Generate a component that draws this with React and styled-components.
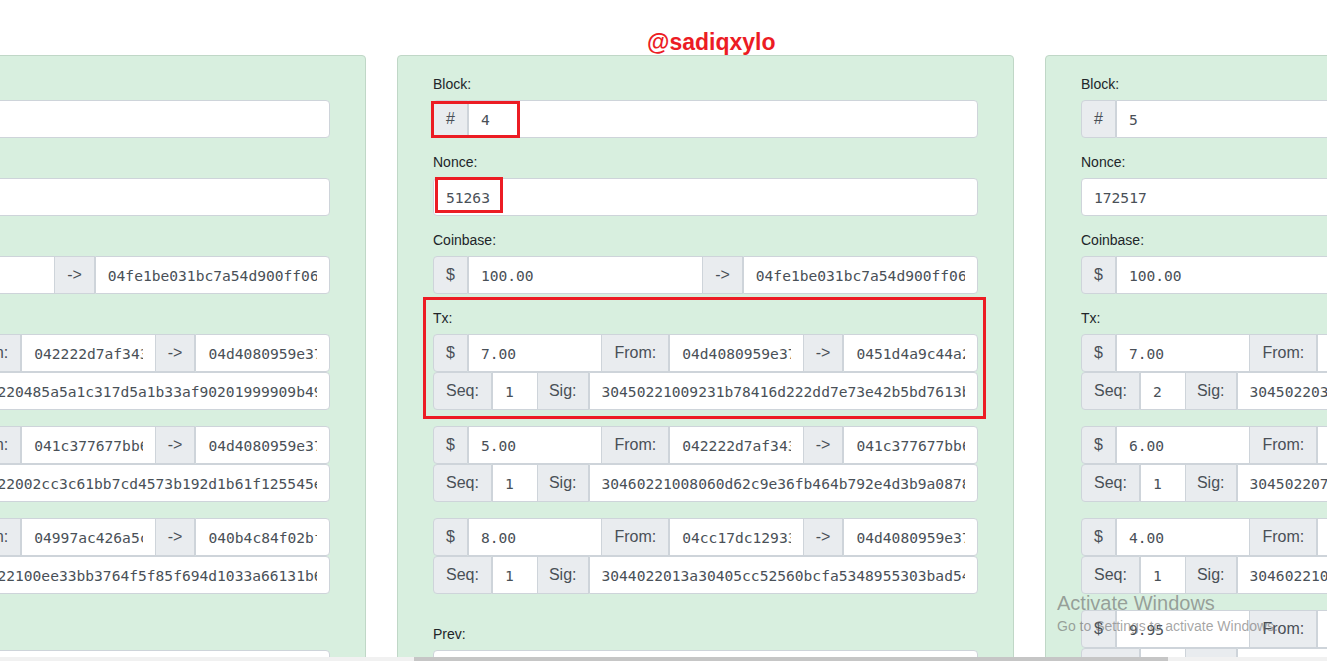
import React from 'react';
import styled, { createGlobalStyle } from 'styled-components';

const GlobalStyle = createGlobalStyle`
  html, body {
    margin: 0;
    padding: 0;
    background: #fff;
    overflow: hidden;
  }
  body {
    font-family: "Liberation Sans", Arial, sans-serif;
    color: #212529;
  }
`;

const Page = styled.div`
  position: relative;
  width: 1327px;
  height: 661px;
  overflow: hidden;
`;

const Handle = styled.div`
  position: absolute;
  top: 31px;
  left: 647px;
  font-size: 23px;
  line-height: 23px;
  font-weight: 700;
  color: #ec1c24;
  z-index: 3;
`;

const Chain = styled.div`
  display: flex;
  align-items: flex-start;
  gap: 31px;
  width: max-content;
  padding-top: 55px;
  margin-left: -251px;
`;

const Card = styled.div`
  flex: 0 0 617px;
  width: 617px;
  min-width: 0;
  box-sizing: border-box;
  background: #d8efdf;
  border: 1px solid #c0d7c7;
  border-radius: 4px;
  padding: 20px 35px 24px;
`;

const Field = styled.div`
  position: relative;
  display: flow-root;
  margin-bottom: 16px;
`;

const Label = styled.label`
  display: block;
  font-size: 14px;
  line-height: 16px;
  margin-bottom: 8px;
  color: #212529;
`;

const TxItem = styled.div`
  margin-bottom: 16px;
`;

const Group = styled.div`
  display: flex;
  align-items: stretch;
  width: 100%;
  min-width: 0;

  & > * + * {
    margin-left: -1px;
  }
  & > *:first-child {
    border-top-left-radius: 4px;
    border-bottom-left-radius: 4px;
  }
  & > *:last-child {
    border-top-right-radius: 4px;
    border-bottom-right-radius: 4px;
  }
`;

const Addon = styled.span`
  display: flex;
  align-items: center;
  flex: 0 0 auto;
  padding: 6px ${(p) => (p.$tight ? 11 : 12)}px;
  font-size: 16px;
  line-height: 24px;
  color: #495057;
  background: #e9ecef;
  border: 1px solid #ced4da;
  white-space: nowrap;
`;

const Input = styled.input`
  flex: ${(p) => (p.$w ? `0 0 ${p.$w}px` : '1 1 0')};
  width: ${(p) => (p.$w ? `${p.$w}px` : '0')};
  min-width: 0;
  box-sizing: border-box;
  height: 38px;
  margin: 0;
  padding: 6px 12px;
  font-family: "DejaVu Sans Mono", "Liberation Mono", monospace;
  font-size: 14.6px;
  line-height: 24px;
  color: #495057;
  background: #fff;
  border: 1px solid #ced4da;
  border-radius: 0;
  outline: none;
`;

const Mark = styled.div`
  position: absolute;
  left: ${(p) => p.$x}px;
  top: ${(p) => p.$y}px;
  width: ${(p) => p.$w}px;
  height: ${(p) => p.$h}px;
  box-sizing: border-box;
  border: 3px solid #ec1c24;
  pointer-events: none;
  z-index: 2;
`;

const Watermark = styled.div`
  position: absolute;
  left: 1057px;
  top: 593px;
  color: rgba(105, 105, 105, 0.6);
  pointer-events: none;
  z-index: 4;
`;

const WmTitle = styled.div`
  font-size: 20px;
  line-height: 20px;
`;

const WmText = styled.div`
  margin-top: 6px;
  font-size: 14px;
  line-height: 14px;
`;

const ScrollTrack = styled.div`
  position: absolute;
  left: 0;
  right: 0;
  bottom: 0;
  height: 4px;
  background: #f1f1f1;
  z-index: 5;
`;

const ScrollThumb = styled.div`
  margin-left: 414px;
  width: 754px;
  height: 100%;
  background: #c6c6c6;
`;

const K = {
  coin: '04fe1be031bc7a54d900ff06e08c7bd1e7bd14e2de0e9e4f4e2b3d1d4c6bb0b4d1a07f3c',
  d408: '04d4080959e37a8c2b0f5d1e66c3b72a9e0f1d44c8b7e51a3cd2f09b6e7a15c4d8e2f90a',
  a222: '042222d7af3437c1e5b8a09d3f62e4b7c1a58d90e2f36b4c7d1e8a5f0b93c2d6e4a71b8',
  c377: '041c377677bb6e2a8f4d1c09b35e7a62d8f1c4b90e3a75d2c6f8b1e04a9d37c5b2e61f0',
  d4a9: '0451d4a9c44a2b7e9f3c6d0a81e5b4f27c9d3a06e8b15f4c2d7a90e3b6c1f58d4a2e7b9',
  cc17: '04cc17dc129337e4a1b6f8d2c09e5a73b4d1f6c82e0a9b5d3f7c1e4a68b2d90f3c5e7a1',
  ac42: '04997ac426a5c3e8b1d7f40a2c6e9b53d1f8a04c7e2b6d95a3f1c8e07b4d2a6f9c3e5b1',
  b4c8: '040b4c84f02bf7a3e9c1d5b08f6a2e4c7d3b19f0e5a8c2d6b4f71e3a9c0d5b8e2f6a4c',
};

const blocks = [
  {
    block: 3,
    nonce: '35230',
    coinbase: { amount: '100.00', to: K.coin },
    txs: [
      { amount: '10.00', from: K.a222, to: K.d408, seq: 1, sig: '30440220485a5a1c317d5a1b33af90201999909b49c2e7f1a0d83b6e5c94f2a17d0b8e3c6' },
      { amount: '20.00', from: K.c377, to: K.d408, seq: 1, sig: '3044022002cc3c61bb7cd4573b192d1b61f125545e8a1d07c3f9b2e64a5d81c0f7e3b9a2' },
      { amount: '15.00', from: K.ac42, to: K.b4c8, seq: 1, sig: '3045022100ee33bb3764f5f85f694d1033a66131b6d2e8a4c07f1b93e5d6a2c80f4b7e1d9' },
    ],
    prev: '0000a4b1c9e2f7d83a6b05c1e94f2d7a8b3c6e0f91d4a5b72c8e3f06d1a9b4c7',
    hash: '0000d8f3a1b6c4e29f07d5a83b1c6e4f2a9d0b7c85e3f1a6d4b92c0e7f5a38b1',
  },
  {
    block: 4,
    nonce: '51263',
    coinbase: { amount: '100.00', to: K.coin },
    txs: [
      { amount: '7.00', from: K.d408, to: K.d4a9, seq: 1, sig: '30450221009231b78416d222dd7e73e42b5bd7613b4e8c1a07f3d92b6e5a4c81d0f7b3e9c2' },
      { amount: '5.00', from: K.a222, to: K.c377, seq: 1, sig: '30460221008060d62c9e36fb464b792e4d3b9a08781c5e2f7a0d4b93c6e18f5a2d07b4c9e3' },
      { amount: '8.00', from: K.cc17, to: K.d408, seq: 1, sig: '3044022013a30405cc52560bcfa5348955303bad54e1c7a09f3b8d26e4a5c17f0b2d9e8a3' },
    ],
    prev: '0000d8f3a1b6c4e29f07d5a83b1c6e4f2a9d0b7c85e3f1a6d4b92c0e7f5a38b1',
    hash: '000072e5b9c1a4d8f3e06b2c7a95d1f4e8b3a0c6d29f5e1b7a4c83d0f6e2b9a5',
    marks: true,
  },
  {
    block: 5,
    nonce: '172517',
    coinbase: { amount: '100.00', to: K.coin },
    txs: [
      { amount: '7.00', from: K.d4a9, to: K.cc17, seq: 2, sig: '3045022034b1e9c7a2d5f80e3c6b4a91d7f2e05c8b3a6d1e9f4c27b0a5d8e3f61c9b2a7' },
      { amount: '6.00', from: K.c377, to: K.ac42, seq: 1, sig: '304502207e1c9a4d3b6f82e05a7c1d94b3e6f2a08d5c7b1e94a3f60c2d8b5e7a1f4c9d3' },
      { amount: '4.00', from: K.b4c8, to: K.a222, seq: 1, sig: '3046022100f3a7c2e9b5d14a8e06c3b7f91d2a5e4c8b0f6d3a91e7c52b4d8a0f3e6c1b9d7' },
      { amount: '9.95', from: K.d408, to: K.b4c8, seq: 1, sig: '30450221008d2b6f1e9c4a37d05b8e2c6f1a94d3e7b0c5a82f6d1e4b93c7a0f5d2e8b6c1' },
    ],
    prev: '000072e5b9c1a4d8f3e06b2c7a95d1f4e8b3a0c6d29f5e1b7a4c83d0f6e2b9a5',
    hash: '00001c6e8a3f5b2d97e04c1a6b8d3f5e2a9c07b4d1e6f38a5c2b9d0e7f4a16c3',
  },
];

const Val = ({ v, w }) => <Input readOnly value={v} $w={w} />;

const Block = ({ data }) => (
  <Card>
    <Field>
      <Label>Block:</Label>
      <Group>
        <Addon>#</Addon>
        <Val v={String(data.block)} />
      </Group>
      {data.marks && <Mark $x={-2} $y={25} $w={89} $h={37} />}
    </Field>

    <Field>
      <Label>Nonce:</Label>
      <Group>
        <Val v={data.nonce} />
      </Group>
      {data.marks && <Mark $x={2} $y={23} $w={68} $h={36} />}
    </Field>

    <Field>
      <Label>Coinbase:</Label>
      <Group>
        <Addon>$</Addon>
        <Val v={data.coinbase.amount} />
        <Addon>-&gt;</Addon>
        <Val v={data.coinbase.to} />
      </Group>
    </Field>

    <Field>
      <Label>Tx:</Label>
      {data.txs.map((tx, i) => (
        <TxItem key={i}>
          <Group>
            <Addon>$</Addon>
            <Val v={tx.amount} />
            <Addon>From:</Addon>
            <Val v={tx.from} />
            <Addon>-&gt;</Addon>
            <Val v={tx.to} />
          </Group>
          <Group>
            <Addon>Seq:</Addon>
            <Val v={String(tx.seq)} w={46} />
            <Addon $tight>Sig:</Addon>
            <Val v={tx.sig} />
          </Group>
        </TxItem>
      ))}
      {data.marks && <Mark $x={-10} $y={-13} $w={563} $h={122} />}
    </Field>

    <Field>
      <Label>Prev:</Label>
      <Group>
        <Val v={data.prev} />
      </Group>
    </Field>

    <Field>
      <Label>Hash:</Label>
      <Group>
        <Val v={data.hash} />
      </Group>
    </Field>
  </Card>
);

export default function App() {
  return (
    <Page>
      <GlobalStyle />
      <Handle>@sadiqxylo</Handle>
      <Chain>
        {blocks.map((b) => (
          <Block key={b.block} data={b} />
        ))}
      </Chain>
      <Watermark>
        <WmTitle>Activate Windows</WmTitle>
        <WmText>Go to Settings to activate Windows.</WmText>
      </Watermark>
      <ScrollTrack>
        <ScrollThumb />
      </ScrollTrack>
    </Page>
  );
}
